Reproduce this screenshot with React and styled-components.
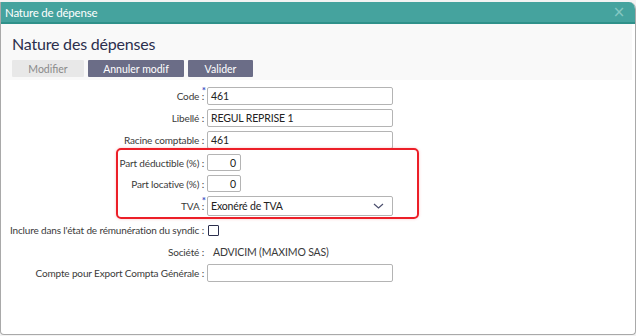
import React from 'react';
import styled, { createGlobalStyle } from 'styled-components';

const GlobalStyle = createGlobalStyle`
  html, body {
    margin: 0;
    padding: 0;
    background: #f3f3f3;
  }
  body {
    font-family: Lato, "Open Sans", sans-serif;
    color: #333;
  }
`;

const Window = styled.div`
  margin-top: 2px;
  width: 634px;
  height: 332px;
  background: #fff;
  border: 1px solid #a9a9a9;
  border-top: none;
  border-radius: 0 7px 4px 4px;
  display: flex;
  flex-direction: column;
  overflow: hidden;
`;

const TitleBar = styled.div`
  height: 20px;
  background: #45a39e;
  border-bottom: 2px solid #2f918a;
  display: flex;
  align-items: center;
  justify-content: space-between;
  padding: 0 10px 0 4px;
  color: #fff;
  font-size: 11.5px;
  letter-spacing: -0.2px;
`;

const CloseButton = styled.span`
  color: #86c8c3;
  font-size: 15px;
  line-height: 1;
  font-family: "DejaVu Sans", sans-serif;
`;

const Header = styled.div`
  background: #f9f9f9;
  margin-right: 3px;
  height: 56px;
  padding: 9px 11px 0;
  box-sizing: border-box;
`;

const PageTitle = styled.h1`
  margin: 0;
  font-size: 16px;
  letter-spacing: -0.2px;
  font-weight: 400;
  color: #2c2f4d;
  line-height: 22px;
`;

const Toolbar = styled.div`
  display: flex;
  gap: 4px;
  margin-top: 5px;
`;

const ToolButton = styled.button`
  height: 17px;
  width: ${(p) => p.$w}px;
  border: none;
  border-radius: 1px;
  padding: 0;
  font-family: inherit;
  font-size: 10.5px;
  background: ${(p) => (p.$disabled ? '#e8e8e8' : '#6b6d87')};
  color: ${(p) => (p.$disabled ? '#8a8a8a' : '#fff')};
`;

const Form = styled.div`
  display: flex;
  flex-direction: column;
  padding-top: 7px;
`;

const Row = styled.div`
  display: flex;
  align-items: center;
  height: ${(p) => p.$h || 18}px;
  margin-top: ${(p) => p.$mt || 0}px;
  font-size: 10px;
  letter-spacing: -0.15px;
`;

const Label = styled.div`
  flex: 0 0 203px;
  text-align: right;
  white-space: nowrap;
  color: #3a3a3a;
`;

const Colon = styled.span`
  position: relative;
  &::before {
    content: ${(p) => (p.$required ? "'*'" : "''")};
    position: absolute;
    left: 0;
    top: -6px;
    color: #3d4fc4;
    font-size: 10px;
    font-weight: 700;
  }
`;

const Input = styled.div`
  margin-left: 3px;
  width: ${(p) => p.$w || 186}px;
  height: 100%;
  box-sizing: border-box;
  border: 1px solid #b4b4b4;
  border-radius: 2px;
  background: #fff;
  display: flex;
  align-items: center;
  justify-content: ${(p) => (p.$right ? 'flex-end' : 'space-between')};
  padding: 0 ${(p) => (p.$right ? 4 : 8)}px 0 3px;
  color: #222;
  font-size: 10.5px;
`;

const Group = styled.div`
  position: relative;
  display: flex;
  flex-direction: column;
  &::before {
    content: '';
    position: absolute;
    left: 115px;
    width: 303px;
    top: -1px;
    bottom: -3px;
    box-sizing: border-box;
    border: 2px solid #ec1f28;
    border-radius: 5px;
    box-shadow: 0 0 3px rgba(236, 31, 40, 0.25);
    pointer-events: none;
  }
`;

const Checkbox = styled.div`
  margin-left: 4px;
  width: 11px;
  height: 11px;
  box-sizing: border-box;
  border: 1.5px solid #2c2f4d;
  border-radius: 1px;
`;

const Value = styled.div`
  margin-left: 9px;
  color: #3a3a3a;
  font-size: 10.5px;
`;

const Chevron = () => (
  <svg width="11" height="6" viewBox="0 0 11 6">
    <path d="M1 1 L5.5 5 L10 1" fill="none" stroke="#4b4f6e" strokeWidth="1.2" />
  </svg>
);

const Field = ({ label, required, children, ...rest }) => (
  <Row {...rest}>
    <Label>
      {label} <Colon $required={required}>:</Colon>
    </Label>
    {children}
  </Row>
);

export default function App() {
  return (
    <>
      <GlobalStyle />
      <Window>
        <TitleBar>
          <span>Nature de dépense</span>
          <CloseButton>×</CloseButton>
        </TitleBar>
        <Header>
          <PageTitle>Nature des dépenses</PageTitle>
          <Toolbar>
            <ToolButton $disabled $w={72}>Modifier</ToolButton>
            <ToolButton $w={96}>Annuler modif</ToolButton>
            <ToolButton $w={65}>Valider</ToolButton>
          </Toolbar>
        </Header>
        <Form>
          <Field label="Code" required>
            <Input>461</Input>
          </Field>
          <Field label="Libellé" $mt={4}>
            <Input>REGUL REPRISE 1</Input>
          </Field>
          <Field label="Racine comptable" $mt={4}>
            <Input>461</Input>
          </Field>
          <Group>
            <Field label="Part déductible (%)" $mt={5} $h={17}>
              <Input $w={34} $right>0</Input>
            </Field>
            <Field label="Part locative (%)" $mt={4} $h={17}>
              <Input $w={34} $right>0</Input>
            </Field>
            <Field label="TVA" required $mt={4} $h={20}>
              <Input>
                Exonéré de TVA
                <Chevron />
              </Input>
            </Field>
          </Group>
          <Field label="Inclure dans l'état de rémunération du syndic" $mt={6} $h={16}>
            <Checkbox />
          </Field>
          <Field label="Société" $mt={6} $h={16}>
            <Value>ADVICIM (MAXIMO SAS)</Value>
          </Field>
          <Field label="Compte pour Export Compta Générale" $mt={4}>
            <Input />
          </Field>
        </Form>
      </Window>
    </>
  );
}
